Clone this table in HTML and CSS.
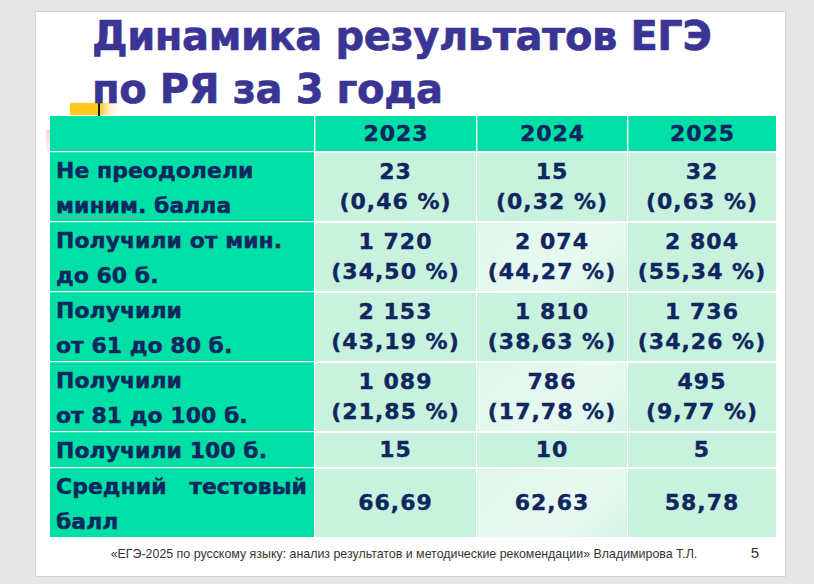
FILE: index.html
```html
<!DOCTYPE html>
<html lang="ru">
<head>
<meta charset="utf-8">
<title>Динамика результатов ЕГЭ</title>
<link rel="stylesheet" href="styles.css">
</head>
<body>
<div class="slide">
  <div class="deco-yellow"></div>
  <div class="deco-line"></div>
  <div class="deco-pink"></div>
  <h1 class="title">Динамика результатов ЕГЭ<br>по РЯ за 3 года</h1>
  <div class="table">
    <div class="cell head"></div>
    <div class="cell head c">2023</div>
    <div class="cell head c">2024</div>
    <div class="cell head c">2025</div>

    <div class="cell label">Не преодолели<br><span class="spell">миним</span>. балла</div>
    <div class="cell data"><span>23<br>(0,46 %)</span></div>
    <div class="cell data"><span>15<br>(0,32 %)</span></div>
    <div class="cell data"><span>32<br>(0,63 %)</span></div>

    <div class="cell label">Получили от мин.<br>до 60 б.</div>
    <div class="cell data"><span>1 720<br>(34,50 %)</span></div>
    <div class="cell data light"><span>2 074<br>(44,27 %)</span></div>
    <div class="cell data"><span>2 804<br>(55,34 %)</span></div>

    <div class="cell label">Получили<br>от 61 до 80 б.</div>
    <div class="cell data"><span>2 153<br>(43,19 %)</span></div>
    <div class="cell data"><span>1 810<br>(38,63 %)</span></div>
    <div class="cell data"><span>1 736<br>(34,26 %)</span></div>

    <div class="cell label">Получили<br>от 81 до 100 б.</div>
    <div class="cell data"><span>1 089<br>(21,85 %)</span></div>
    <div class="cell data light"><span>786<br>(17,78 %)</span></div>
    <div class="cell data"><span>495<br>(9,77 %)</span></div>

    <div class="cell label">Получили 100 б.</div>
    <div class="cell data"><span>15</span></div>
    <div class="cell data"><span>10</span></div>
    <div class="cell data"><span>5</span></div>

    <div class="cell label"><span class="just">Средний тестовый</span>балл</div>
    <div class="cell data"><span>66,69</span></div>
    <div class="cell data light"><span>62,63</span></div>
    <div class="cell data"><span>58,78</span></div>
  </div>
  <div class="footer">
    <span class="source">«ЕГЭ-2025 по русскому языку: анализ результатов и методические рекомендации» Владимирова Т.Л.</span>
    <span class="page">5</span>
  </div>
</div>
</body>
</html>
```

FILE: styles.css
```css
html, body {
  margin: 0;
  padding: 0;
}
body {
  background: #e6e6e6;
  width: 814px;
  height: 584px;
  overflow: hidden;
  padding: 11px 0 0 35px;
  box-sizing: border-box;
  font-family: "DejaVu Sans", Verdana, sans-serif;
}
.slide {
  position: relative;
  width: 751px;
  height: 566px;
  box-sizing: border-box;
  background: #ffffff;
  border: 1px solid #d4d4d4;
  padding: 0 0 0 14px;
}
.title {
  position: relative;
  margin: -2px 0 0 42px;
  font-family: "DejaVu Sans", Verdana, sans-serif;
  font-weight: bold;
  font-size: 40px;
  line-height: 53px;
  color: #3a3495;
  letter-spacing: -0.4px;
  -webkit-text-stroke: 0.6px #3a3495;
}
.deco-yellow {
  position: absolute;
  left: 34px;
  top: 91px;
  width: 50px;
  height: 12px;
  background: linear-gradient(to right, #ffc81c 0, #ffc81c 58%, rgba(255, 220, 120, 0.4) 80%, rgba(255, 255, 255, 0) 100%);
}
.deco-line {
  position: absolute;
  left: 62px;
  top: 91px;
  width: 2px;
  height: 13px;
  background: #1a1a1a;
}
.deco-pink {
  position: absolute;
  left: 10px;
  top: 118px;
  width: 6px;
  height: 22px;
  background: linear-gradient(to bottom, rgba(255, 170, 180, 0.5), rgba(255, 200, 210, 0.2));
}
.table {
  position: relative;
  display: grid;
  grid-template-columns: 264px 161px 150px 148px;
  grid-template-rows: 35px 68px 68px 68px 68px 34px 68px;
  column-gap: 1px;
  row-gap: 2px;
  width: 727px;
  background: #ffffff;
  color: #10265e;
  font-weight: bold;
  font-size: 22px;
  line-height: 34px;
  -webkit-text-stroke: 0.4px #10265e;
}
.cell {
  box-sizing: border-box;
}
.head {
  background: #00e0a6;
  line-height: 35px;
}
.c {
  text-align: center;
  letter-spacing: 1px;
}
.label {
  background: #00e0a6;
  padding: 0 7px 0 6px;
  border-top: 1px solid #3ae6b8;
  margin-top: -1px;
  line-height: 35px;
}
.head + .head {
  border-left: 1px solid #5ceac4;
}
.data {
  display: flex;
  align-items: center;
  justify-content: center;
  background: #c8f2de;
  text-align: center;
  letter-spacing: 1px;
  line-height: 30px;
}
.light {
  background: linear-gradient(135deg, #def6ea 0%, #e8f9f1 60%, #d6f4e6 100%);
}
.just {
  display: block;
  text-align: justify;
  text-align-last: justify;
}
.spell {
  text-decoration: underline dotted #b58a6a 1px;
  text-underline-offset: 4px;
  -webkit-text-stroke: 0.4px #10265e;
}
.footer {
  display: flex;
  align-items: baseline;
  margin: 7px 0 0 0;
  width: 735px;
  font-family: "Liberation Sans", Arial, sans-serif;
  font-size: 12.4px;
  color: #333333;
}
.source {
  flex: 1;
  text-align: center;
  padding-left: 33px;
}
.page {
  width: 60px;
  text-align: center;
  font-size: 15px;
  font-weight: normal;
}
```
